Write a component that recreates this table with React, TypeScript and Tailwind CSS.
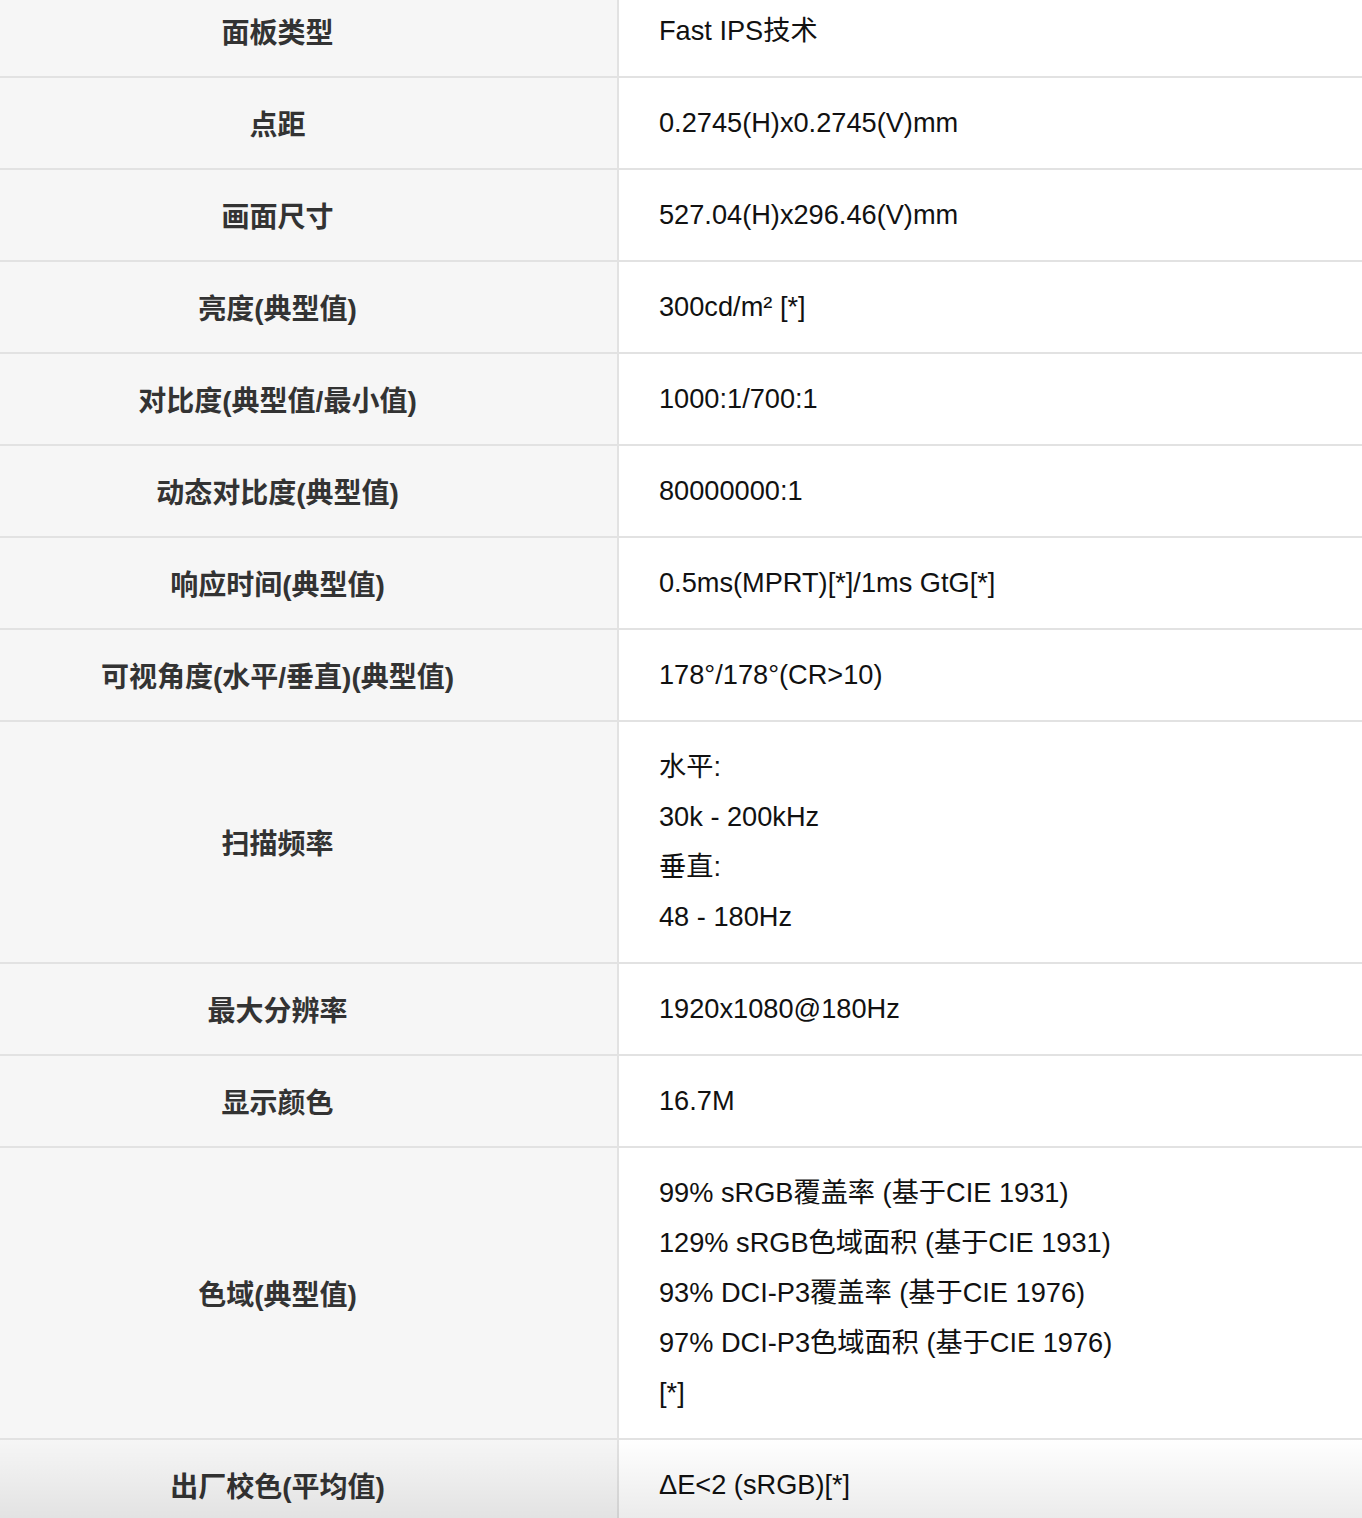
import React from 'react';

const rows: { label: string; value: string[] }[] = [
  { label: '面板类型', value: ['Fast IPS技术'] },
  { label: '点距', value: ['0.2745(H)x0.2745(V)mm'] },
  { label: '画面尺寸', value: ['527.04(H)x296.46(V)mm'] },
  { label: '亮度(典型值)', value: ['300cd/m² [*]'] },
  { label: '对比度(典型值/最小值)', value: ['1000:1/700:1'] },
  { label: '动态对比度(典型值)', value: ['80000000:1'] },
  { label: '响应时间(典型值)', value: ['0.5ms(MPRT)[*]/1ms GtG[*]'] },
  { label: '可视角度(水平/垂直)(典型值)', value: ['178°/178°(CR>10)'] },
  { label: '扫描频率', value: ['水平:', '30k - 200kHz', '垂直:', '48 - 180Hz'] },
  { label: '最大分辨率', value: ['1920x1080@180Hz'] },
  { label: '显示颜色', value: ['16.7M'] },
  {
    label: '色域(典型值)',
    value: [
      '99% sRGB覆盖率 (基于CIE 1931)',
      '129% sRGB色域面积 (基于CIE 1931)',
      '93% DCI-P3覆盖率 (基于CIE 1976)',
      '97% DCI-P3色域面积 (基于CIE 1976)',
      '[*]',
    ],
  },
  { label: '出厂校色(平均值)', value: ['ΔE<2 (sRGB)[*]'] },
  { label: '', value: [''] },
];

export default function App() {
  return (
    <div
      className="relative h-[1518px] w-[1362px] overflow-hidden bg-white"
      style={{ fontFamily: '"Liberation Sans", "Noto Sans CJK SC", sans-serif' }}
    >
      <div className="-mt-[14px]">
        {rows.map((row, i) => (
          <div key={i} className="flex border-b-2 border-[#e2e2e2]">
            <div className="flex w-[619px] shrink-0 items-center justify-center border-r-2 border-[#e2e2e2] bg-[#f6f6f6] pr-[62px] pt-[5px] text-[28px] font-bold text-[#333333]">
              {row.label}
            </div>
            <div className="flex-1 py-5 pl-10 text-[27.2px] leading-[50px] text-[#111111]">
              {row.value.map((line, j) => (
                <div key={j} className="h-[50px]">
                  {line}
                </div>
              ))}
            </div>
          </div>
        ))}
      </div>
      {/* bottom fade */}
      <div className="pointer-events-none absolute bottom-0 left-0 h-[80px] w-full bg-gradient-to-b from-transparent to-[rgba(0,0,0,0.08)]" />
    </div>
  );
}
